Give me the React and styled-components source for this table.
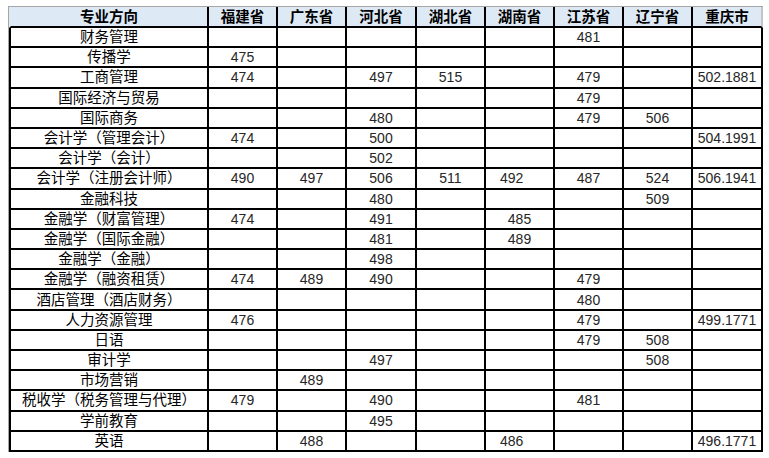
import React from "react";
import styled, { createGlobalStyle } from "styled-components";

const GlobalStyle = createGlobalStyle`
  html, body {
    margin: 0;
    padding: 0;
    background: #ffffff;
  }
  body {
    font-family: "Liberation Sans", "Noto Sans CJK SC", sans-serif;
  }
`;

const Page = styled.div`
  padding: 6px 0 0 8px;
`;

const Frame = styled.div`
  display: inline-block;
  border-top: 1px solid #a6a6a6;
  border-left: 1px solid #a6a6a6;
`;

const Table = styled.table`
  border-spacing: 0;
  table-layout: fixed;
  width: 754px;
  font-size: 14px;
  color: #000;
`;

const HeadCell = styled.th`
  box-sizing: border-box;
  height: 21px;
  padding: 0;
  background: #dde9f5;
  font-weight: bold;
  font-size: 14.5px;
  text-align: center;
  line-height: 18px;
  border-bottom: 2px solid #000;
  border-right: 2px solid ${(p) => (p.$last ? "#c4c4c4" : "#000")};
  border-left: ${(p) => (p.$first ? "2px solid transparent" : "0")};
  white-space: nowrap;
`;

const Row = styled.tr`
  height: 20.2px;
`;

const Cell = styled.td`
  box-sizing: border-box;
  padding: ${(p) => (p.$shift ? "1px 0 0 14px" : "1px 0 0")};
  text-align: ${(p) => (p.$shift ? "left" : "center")};
  line-height: 17px;
  font-size: ${(p) => (p.$first ? "14.5px" : "14px")};
  border-bottom: 2px solid #000;
  border-right: 2px solid #000;
  border-left: ${(p) => (p.$first ? "2px solid #000" : "0")};
  color: ${(p) => (p.$first ? "#000" : "#262626")};
  white-space: nowrap;
  overflow: hidden;
`;

const widths = [200, 69, 69, 70, 69, 69, 69, 69, 70];

const headers = ["专业方向", "福建省", "广东省", "河北省", "湖北省", "湖南省", "江苏省", "辽宁省", "重庆市"];

const rows = [
  ["财务管理", "", "", "", "", "", "481", "", ""],
  ["传播学", "475", "", "", "", "", "", "", ""],
  ["工商管理", "474", "", "497", "515", "", "479", "", "502.1881"],
  ["国际经济与贸易", "", "", "", "", "", "479", "", ""],
  ["国际商务", "", "", "480", "", "", "479", "506", ""],
  ["会计学（管理会计）", "474", "", "500", "", "", "", "", "504.1991"],
  ["会计学（会计）", "", "", "502", "", "", "", "", ""],
  ["会计学（注册会计师）", "490", "497", "506", "511", "492", "487", "524", "506.1941"],
  ["金融科技", "", "", "480", "", "", "", "509", ""],
  ["金融学（财富管理）", "474", "", "491", "", "485", "", "", ""],
  ["金融学（国际金融）", "", "", "481", "", "489", "", "", ""],
  ["金融学（金融）", "", "", "498", "", "", "", "", ""],
  ["金融学（融资租赁）", "474", "489", "490", "", "", "479", "", ""],
  ["酒店管理（酒店财务）", "", "", "", "", "", "480", "", ""],
  ["人力资源管理", "476", "", "", "", "", "479", "", "499.1771"],
  ["日语", "", "", "", "", "", "479", "508", ""],
  ["审计学", "", "", "497", "", "", "", "508", ""],
  ["市场营销", "", "489", "", "", "", "", "", ""],
  ["税收学（税务管理与代理）", "479", "", "490", "", "", "481", "", ""],
  ["学前教育", "", "", "495", "", "", "", "", ""],
  ["英语", "", "488", "", "", "486", "", "", "496.1771"],
];

// a couple of 湖南省 values sit left of centre in the sheet
const shifted = { "7-5": true, "20-5": true };

export default function App() {
  return (
    <Page>
      <GlobalStyle />
      <Frame>
        <Table>
          <colgroup>
            {widths.map((w, i) => (
              <col key={i} style={{ width: w }} />
            ))}
          </colgroup>
          <thead>
            <tr>
              {headers.map((h, i) => (
                <HeadCell key={h} $first={i === 0} $last={i === headers.length - 1}>
                  {h}
                </HeadCell>
              ))}
            </tr>
          </thead>
          <tbody>
            {rows.map((r, ri) => (
              <Row key={r[0]}>
                {r.map((v, ci) => (
                  <Cell key={ci} $first={ci === 0} $shift={shifted[`${ri}-${ci}`]}>
                    {v}
                  </Cell>
                ))}
              </Row>
            ))}
          </tbody>
        </Table>
      </Frame>
    </Page>
  );
}
